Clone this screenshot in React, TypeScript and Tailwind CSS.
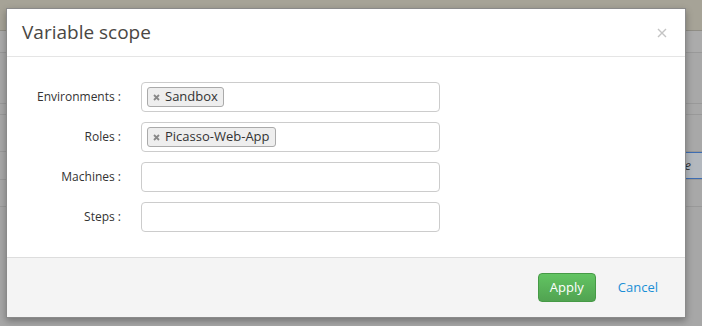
import * as React from 'react';

const font = { fontFamily: '"Open Sans", "Noto Sans", sans-serif' };

function Tag({ label }: { label: string }) {
  return (
    <span className="flex h-[20px] items-center gap-[5px] rounded-[3px] border border-[#aaaaaa] bg-[#eeeeee] pl-[5px] pr-[5px] text-[13px] text-[#333]">
      <svg width="7" height="7" viewBox="0 0 7 7">
        <path d="M1 1 L6 6 M6 1 L1 6" stroke="#888" strokeWidth="1.8" />
      </svg>
      {label}
    </span>
  );
}

function Row({ label, tag }: { label: string; tag?: string }) {
  return (
    <div className="flex items-center">
      <div className="w-[114px] text-right text-[12px] text-[#333]">{label}</div>
      <div className="ml-[20px] flex h-[30px] w-[299px] items-center rounded-[4px] border border-[#cccccc] bg-white px-[5px]">
        {tag && <Tag label={tag} />}
      </div>
    </div>
  );
}

export default function App() {
  return (
    <div className="relative h-[326px] w-[702px] overflow-hidden bg-[#a7a7a7]" style={font}>
      {/* page behind the overlay */}
      <div className="flex flex-col">
        <div className="h-[31px] border-b border-[#8f8d85] bg-[#a6a397]" />
        <div className="h-[22px] border-b border-[#999] bg-[#ababab]" />
        <div className="h-[51px] border-b border-[#999] bg-[#a8a8a8]" />
        <div className="h-[11px] border-b border-[#999] bg-[#a8a8a8]" />
        <div className="h-[37px] border-b border-[#999] bg-[#a8a8a8]" />
        <div className="flex h-[27px] bg-[#a8a8a8]">
          <div className="flex-1" />
          <div className="flex w-[40px] items-center justify-end border-y border-[#3d6db3] bg-[#b3b8be] pr-[11px] text-[13px] italic text-[#333]">
            Value
          </div>
        </div>
        <div className="h-[28px] border-y border-[#999] bg-[#a8a8a8]" />
      </div>

      {/* modal */}
      <div className="absolute left-[6px] top-[8px] flex w-[680px] flex-col border border-[#8a8a8a] bg-white shadow-[0_3px_7px_rgba(0,0,0,0.3)]">
        <div className="flex h-[48px] items-center justify-between border-b border-[#e5e5e5] pl-[15px] pr-[18px]">
          <h3 className="text-[19px] font-normal text-[#4a4743]">Variable scope</h3>
          <svg width="10" height="10" viewBox="0 0 10 10" className="mt-[1px]">
            <path d="M1 1 L9 9 M9 1 L1 9" stroke="#c4c4c4" strokeWidth="1.4" />
          </svg>
        </div>
        <div className="flex h-[200px] flex-col gap-[10px] pt-[25px]">
          <Row label="Environments :" tag="Sandbox" />
          <Row label="Roles :" tag="Picasso-Web-App" />
          <Row label="Machines :" />
          <Row label="Steps :" />
        </div>
        <div className="flex h-[60px] items-center justify-end gap-[22px] border-t border-[#dddddd] bg-[#f4f4f4] pr-[27px]">
          <button className="h-[29px] w-[58px] rounded-[4px] border border-[#469a46] bg-gradient-to-b from-[#62c462] to-[#51a351] text-[13px] text-white">
            Apply
          </button>
          <span className="text-[13px] text-[#1a8fd6]">Cancel</span>
        </div>
      </div>
    </div>
  );
}
